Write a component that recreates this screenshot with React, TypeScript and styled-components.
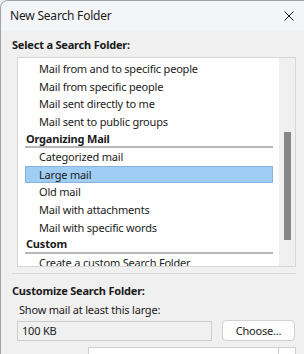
import React from 'react';
import styled, { createGlobalStyle } from 'styled-components';

const GlobalStyle = createGlobalStyle`
  html, body {
    margin: 0;
    padding: 0;
    background: #f0f0f0;
  }
  body {
    font-family: "Noto Sans", "Liberation Sans", sans-serif;
    font-size: 11px;
    letter-spacing: -0.2px;
    color: #1b1b1b;
  }
`;

interface Entry {
  label: string;
  group?: boolean;
  selected?: boolean;
}

const entries: Entry[] = [
  { label: 'Mail from and to specific people' },
  { label: 'Mail from specific people' },
  { label: 'Mail sent directly to me' },
  { label: 'Mail sent to public groups' },
  { label: 'Organizing Mail', group: true },
  { label: 'Categorized mail' },
  { label: 'Large mail', selected: true },
  { label: 'Old mail' },
  { label: 'Mail with attachments' },
  { label: 'Mail with specific words' },
  { label: 'Custom', group: true },
  { label: 'Create a custom Search Folder' },
];

const Window = styled.div`
  width: 304px;
  height: 354px;
  box-sizing: border-box;
  overflow: hidden;
  border-left: 1px solid #a3a3a3;
  border-top: 1px solid #a3a3a3;
  border-top-left-radius: 8px;
  background: #f0f0f0;
`;

const TitleBar = styled.div`
  height: 29px;
  display: flex;
  align-items: center;
  justify-content: space-between;
  padding: 0 9px 0 9px;
  background: #f4f5f9;
  font-size: 12px;
`;

const CloseIcon = styled.svg`
  width: 10px;
  height: 10px;
  margin-right: 1px;
`;

const Body = styled.div`
  padding: 0 8px 0 11px;
  display: flex;
  flex-direction: column;
`;

const Heading = styled.div`
  font-weight: 700;
  line-height: 16px;
  margin-top: 7px;
`;

const ListBox = styled.div`
  margin: 4px 0 0 5px;
  height: 210px;
  box-sizing: border-box;
  border: 1px solid #d6d6d6;
  background: #ffffff;
  display: flex;
  overflow: hidden;
`;

const Items = styled.div`
  flex: 1;
  padding: 2px 6px 0 7px;
`;

const Row = styled.div<{ $selected?: boolean }>`
  height: 17.6px;
  box-sizing: border-box;
  display: flex;
  align-items: center;
  padding-left: 13px;
  white-space: nowrap;
  background: ${p => (p.$selected ? '#9fcdf3' : 'transparent')};
  border: 1px solid ${p => (p.$selected ? '#86b3de' : 'transparent')};
`;

const GroupRow = styled.div`
  height: 17.6px;
  box-sizing: border-box;
  display: flex;
  align-items: center;
  padding-left: 1px;
  font-weight: 700;
  border-bottom: 2px solid #b8b8b8;
`;

const Track = styled.div`
  width: 16px;
  background: #f0f0f0;
  display: flex;
  justify-content: center;
`;

const Thumb = styled.div`
  width: 7px;
  height: 108px;
  margin-top: 74px;
  background: #878787;
`;

const Separator = styled.div`
  height: 1px;
  margin-top: 6px;
  background: #d8d8d8;
`;

const Heading2 = styled(Heading)`
  margin-top: 9px;
`;

const Label = styled.div`
  line-height: 16px;
  margin: 3px 0 0 7px;
`;

const Controls = styled.div`
  display: flex;
  align-items: center;
  margin: 2px 0 0 5px;
  gap: 10px;
`;

const SizeField = styled.div`
  width: 195px;
  height: 20px;
  box-sizing: border-box;
  border: 1px solid #cdcdcd;
  background: #f0f0f0;
  display: flex;
  align-items: center;
  padding-left: 4px;
`;

const Button = styled.div`
  width: 73px;
  height: 21px;
  box-sizing: border-box;
  border: 1px solid #d2d2d2;
  border-radius: 4px;
  background: #fdfdfd;
  display: flex;
  align-items: center;
  justify-content: center;
`;

const Combo = styled.div`
  margin: 6px 0 0 76px;
  height: 20px;
  box-sizing: border-box;
  border: 1px solid #cdcdcd;
  background: #ffffff;
  display: flex;
  justify-content: flex-end;
`;

const ComboArrow = styled.div`
  width: 16px;
  border-left: 1px solid #cdcdcd;
`;

export default function App() {
  return (
    <>
      <GlobalStyle />
      <Window>
        <TitleBar>
          <span>New Search Folder</span>
          <CloseIcon viewBox="0 0 10 10">
            <path d="M0.5 0.5 L9.5 9.5 M9.5 0.5 L0.5 9.5" stroke="#1b1b1b" strokeWidth="1" />
          </CloseIcon>
        </TitleBar>
        <Body>
          <Heading>Select a Search Folder:</Heading>
          <ListBox>
            <Items>
              {entries.map(e =>
                e.group ? (
                  <GroupRow key={e.label}>{e.label}</GroupRow>
                ) : (
                  <Row key={e.label} $selected={e.selected}>
                    {e.label}
                  </Row>
                )
              )}
            </Items>
            <Track>
              <Thumb />
            </Track>
          </ListBox>
          <Separator />
          <Heading2>Customize Search Folder:</Heading2>
          <Label>Show mail at least this large:</Label>
          <Controls>
            <SizeField>100 KB</SizeField>
            <Button>Choose...</Button>
          </Controls>
          <Combo>
            <ComboArrow />
          </Combo>
        </Body>
      </Window>
    </>
  );
}
